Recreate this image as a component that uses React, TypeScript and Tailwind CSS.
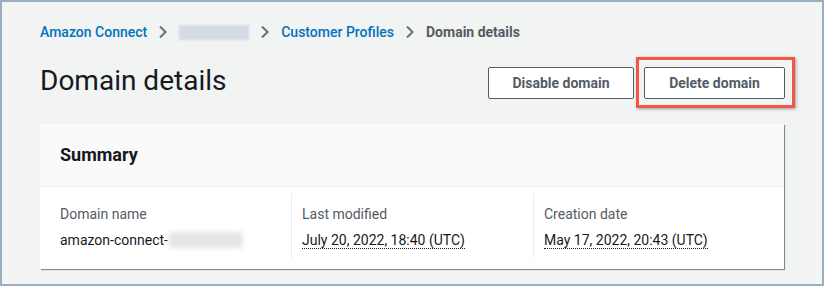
import React from 'react';

const font = { fontFamily: 'Roboto, "Noto Sans", Arial, sans-serif' };

const Chevron = () => (
  <svg width="10" height="14" viewBox="0 0 10 14" className="mx-[11px] shrink-0">
    <path d="M2 1.5 L7.5 7 L2 12.5" fill="none" stroke="#687078" strokeWidth="2" />
  </svg>
);

interface Item {
  label: string;
  value: React.ReactNode;
  dotted?: boolean;
}

const items: Item[] = [
  {
    label: 'Domain name',
    value: (
      <span className="flex items-center">
        amazon-connect-
        <span className="ml-[1px] inline-block h-[16px] w-[74px] rounded-[2px] bg-[#e6e6e6] blur-[2px]"></span>
      </span>
    ),
  },
  { label: 'Last modified', value: 'July 20, 2022, 18:40 (UTC)', dotted: true },
  { label: 'Creation date', value: 'May 17, 2022, 20:43 (UTC)', dotted: true },
];

export default function App() {
  return (
    <div
      className="h-[286px] w-[824px] overflow-hidden border-2 border-[#9aaebf] bg-[#f2f3f3] px-[38px] pt-[19px]"
      style={font}
    >
      {/* Breadcrumbs */}
      <nav className="flex h-[22px] items-center text-[14px]">
        <span className="font-medium text-[#0073bb]">Amazon Connect</span>
        <Chevron />
        <span className="inline-block h-[15px] w-[70px] bg-[#d5dbe4] blur-[1px]"></span>
        <Chevron />
        <span className="font-medium text-[#0073bb]">Customer Profiles</span>
        <Chevron />
        <span className="font-bold text-[#545b64]">Domain details</span>
      </nav>

      {/* Header */}
      <div className="mt-[24px] flex items-center justify-between">
        <h1 className="mt-[-4px] text-[28px] leading-[36px] text-[#16191f]">Domain details</h1>
        <div className="mr-[-1px] flex items-center gap-[10px]">
          <button className="h-[32px] w-[146px] rounded-[2px] border border-[#545b64] bg-white text-[14px] font-bold text-[#545b64]">
            Disable domain
          </button>
          <div className="relative">
            <button className="h-[32px] w-[141px] rounded-[2px] border border-[#545b64] bg-white text-[14px] font-bold text-[#545b64]">
              Delete domain
            </button>
            <div className="pointer-events-none absolute -bottom-[9px] -left-[8px] -right-[10px] -top-[10px] border-[3px] border-[#f4574a] shadow-[1px_1px_3px_rgba(0,0,0,0.35)]"></div>
          </div>
        </div>
      </div>

      {/* Summary card */}
      <div className="mt-[25px] bg-white shadow-[1px_1px_1px_rgba(0,28,36,0.3),1px_1px_0_0_rgba(0,28,36,0.25)]">
        <div className="flex h-[63px] items-center border-b border-[#eaeded] bg-[#fafafa] px-[20px] pb-[2px]">
          <h2 className="text-[18px] font-bold text-[#16191f]">Summary</h2>
        </div>
        <div className="grid grid-cols-[231px_242px_1fr] px-[20px] pb-[11px] pt-[6px]">
          {items.map((it, i) => (
            <div
              key={it.label}
              className={`h-[65px] pt-[11px] ${i > 0 ? 'border-l border-[#eaeded] pl-[10px]' : ''}`}
            >
              <div className="text-[14px] leading-[20px] text-[#545b64]">{it.label}</div>
              <div className="mt-[6px] text-[14px] leading-[20px] text-[#16191f]">
                {it.dotted ? (
                  <span className="border-b border-dotted border-[#16191f]">{it.value}</span>
                ) : (
                  it.value
                )}
              </div>
            </div>
          ))}
        </div>
      </div>
    </div>
  );
}
